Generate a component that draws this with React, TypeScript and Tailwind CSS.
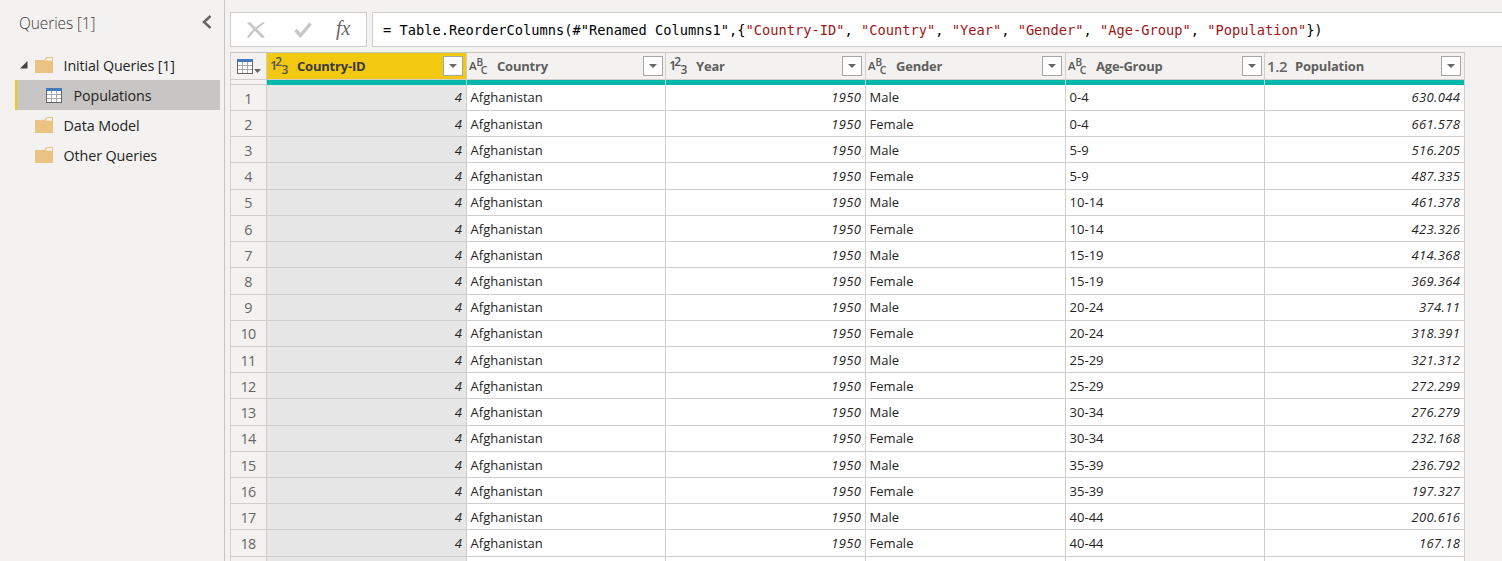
import React from "react";

const columns = [
  { name: "Country-ID", type: "123", edge: "w-[200px]", selected: true },
  { name: "Country", type: "abc", edge: "w-[199px]", narrow: true },
  { name: "Year", type: "123", edge: "w-[200px]" },
  { name: "Gender", type: "abc", edge: "w-[200px]" },
  { name: "Age-Group", type: "abc", edge: "w-[199px]", narrow: true },
  { name: "Population", type: "1.2", edge: "w-[200px]" },
];

const populations = [
  "630.044", "661.578", "516.205", "487.335", "461.378", "423.326", "414.368", "369.364", "374.11",
  "318.391", "321.312", "272.299", "276.279", "232.168", "236.792", "197.327", "200.616", "167.18",
];
const ages = ["0-4", "5-9", "10-14", "15-19", "20-24", "25-29", "30-34", "35-39", "40-44"];
const tallRows = [3, 7, 12, 17];
const raisedRows = [0, 4, 8, 9, 13];

function TableIcon() {
  return (
    <svg width="16" height="15" viewBox="0 0 16 15" shapeRendering="crispEdges" className="shrink-0">
      <rect width="16" height="15" fill="#666" />
      <rect width="16" height="3" fill="#447ab9" />
      <rect x="1" y="3" width="14" height="11" fill="#a9a9a9" />
      {[1, 6, 11].map((x) =>
        [3, 7, 11].map((y) => <rect key={`${x}-${y}`} x={x} y={y} width="4" height="3" fill="#fff" />)
      )}
    </svg>
  );
}

function FolderIcon() {
  return (
    <svg width="18" height="16" viewBox="0 0 18 16" className="shrink-0">
      <path d="M0 3H9L11.5 0H18V16H0Z" fill="#eac282" />
      <path d="M10.5 3.5L12.2 1.2H17V3.5Z" fill="#fff" />
    </svg>
  );
}

function TypeIcon({ type }: { type: string }) {
  if (type === "1.2") {
    return <span className="w-[28px] shrink-0 text-[15px] leading-5 font-semibold tracking-[-0.4px] text-[#666]">1.2</span>;
  }
  if (type === "abc") {
    return (
      <svg width="28" height="24" viewBox="0 -2 28 24" className="shrink-0 overflow-visible font-semibold" fill="#555">
        <text x="0" y="13.5" fontSize="11.5">A</text>
        <text x="7.6" y="9.5" fontSize="10">B</text>
        <text x="11.8" y="17.7" fontSize="10.5">C</text>
      </svg>
    );
  }
  return (
    <svg width="28" height="24" viewBox="0 -2 28 24" className="shrink-0 overflow-visible font-semibold" fill="#555">
      <text x="1" y="13.7" fontSize="13">1</text>
      <text x="6.2" y="10" fontSize="12">2</text>
      <text x="12.5" y="17.8" fontSize="12">3</text>
    </svg>
  );
}

function Sidebar() {
  return (
    <aside className="h-full w-[225px] shrink-0 border-r border-[#c8c6c4] text-[14.3px] text-[#252423]">
      <div className="flex h-[50px] items-start justify-between pt-[12px] pr-[12px] pl-[19px] text-[#3b3a39]">
        <span className="text-[15.5px] leading-[23px] font-light tracking-[-0.1px]">Queries [1]</span>
        <svg width="10" height="14" viewBox="0 0 10 14" className="mt-[3px]">
          <path d="M8.5 1L2 7L8.5 13" fill="none" stroke="#666" strokeWidth="2.5" />
        </svg>
      </div>
      <div className="flex h-[30px] items-center pl-[20px]">
        <svg width="8" height="8" viewBox="0 0 8 8"><path d="M7.5 0V7.5H0Z" fill="#444" /></svg>
        <span className="w-[7px]" />
        <FolderIcon />
        <span className="ml-[10.6px] pt-[2px] tracking-[-0.13px]">Initial Queries [1]</span>
      </div>
      <div className="ml-[15px] flex h-[30px] w-[205px] items-center border-l-2 border-[#f2c811] bg-[#c8c6c4] pl-[29px]">
        <TableIcon />
        <span className="ml-[11.6px] pt-[2px] tracking-[-0.13px]">Populations</span>
      </div>
      {["Data Model", "Other Queries"].map((name) => (
        <div key={name} className="flex h-[30px] items-center pl-[35px]">
          <FolderIcon />
          <span className="ml-[10.6px] pt-[2px] tracking-[-0.1px]">{name}</span>
        </div>
      ))}
    </aside>
  );
}

function FormulaBar() {
  const names = columns.map((c) => c.name);
  return (
    <div className="flex h-[35px] shrink-0 gap-[5px]">
      <div className="flex w-[137px] shrink-0 items-center border border-[#d0cecc] bg-white pl-[15px]">
        <svg width="20" height="18" viewBox="0 0 20 18">
          <path d="M1 2L4 1C9 6 14 11 19 16L16 17C11 12 6 7 1 2Z" fill="#c8c6c4" />
          <path d="M17 1L19 2C13 6 7 11 3 17L1 16C5 10 11 5 17 1Z" fill="#c8c6c4" />
        </svg>
        <svg width="18" height="16" viewBox="0 0 18 16" className="ml-[28px]">
          <path d="M1.5 8L6.5 13.5L16.5 1.5" fill="none" stroke="#c8c6c4" strokeWidth="3.4" />
        </svg>
        <span className="ml-[24px] pb-[3px] font-['Liberation_Serif',serif] text-[20px] leading-5 text-[#666] italic">fx</span>
      </div>
      <div className="flex flex-1 items-center border border-r-0 border-[#d0cecc] bg-white pt-px pl-[10px] font-['DejaVu_Sans_Mono',monospace] text-[13.7px] whitespace-pre text-black">
        <span>= Table.ReorderColumns(#"Renamed Columns1",{"{"}</span>
        {names.map((name, i) => (
          <React.Fragment key={name}>
            <span className="text-[#a31515]">"{name}"</span>
            <span>{i < names.length - 1 ? ", " : "})"}</span>
          </React.Fragment>
        ))}
      </div>
    </div>
  );
}

function GridHeader() {
  return (
    <div className="flex h-[33px] w-[1235px] border-t border-[#c8c6c4]">
      <div className="flex w-[37px] shrink-0 flex-col border-x border-[#d0cecc]">
        <div className="flex h-[26px] items-center pl-[6px]">
          <TableIcon />
          <svg width="7" height="4" viewBox="0 0 7 4" className="mt-[10px] ml-[1px]"><path d="M0 0H7L3.5 4Z" fill="#666" /></svg>
        </div>
        <div className="h-[6px] border-y border-[#d0cecc]" />
      </div>
      {columns.map((c) => (
        <div key={c.name} className={`${c.edge} flex shrink-0 flex-col border-r border-[#d0cecc]`}>
          <div className={`flex h-[27px] items-center border-b border-[#d0cecc] pl-[2px] ${c.narrow ? "pr-[2px]" : "pr-[3px]"} ${c.selected ? "bg-[#f2c811] text-[#3b3a39]" : "text-[#605e5c]"}`}>
            <TypeIcon type={c.type} />
            <span className="flex-1 text-[13px] leading-5 font-bold tracking-[-0.2px]">{c.name}</span>
            <span className="flex h-[20px] w-[20px] items-center justify-center border border-[#a6a6a6] bg-white">
              <svg width="8" height="4" viewBox="0 0 8 4"><path d="M0 0H8L4 4Z" fill="#666" /></svg>
            </span>
          </div>
          <div className="h-[5px] bg-[#01b8aa]" />
        </div>
      ))}
    </div>
  );
}

function GridRow({ index }: { index: number }) {
  const raised = raisedRows.includes(index);
  const cells = [
    "4", "Afghanistan", "1950", index % 2 ? "Female" : "Male", ages[Math.floor(index / 2)], populations[index],
  ];
  return (
    <div className={`flex text-[13px] leading-[18px] ${tallRows.includes(index) ? "h-[27px]" : "h-[26px]"}`}>
      <div className={`flex w-[37px] shrink-0 justify-center border-x border-b border-[#d0cecc] pr-px text-[14.3px] tracking-[-0.7px] text-[#666] ${raised && index ? "pt-[4px]" : "pt-[5px]"}`}>
        {cells[5] ? index + 1 : ""}
      </div>
      {columns.map((c, i) => (
        <div
          key={c.name}
          className={`${c.edge} flex shrink-0 border-r border-b border-[#d0cecc] text-[#252423] ${raised ? "pt-[3px]" : "pt-[4px]"} ${c.type === "abc" ? "pl-[3.6px]" : "justify-end pr-[3.8px] tracking-[0.35px] italic"} ${c.selected ? "bg-[#e6e6e6]" : "bg-white"}`}
        >
          {cells[5] ? cells[i] : ""}
        </div>
      ))}
    </div>
  );
}

export default function App() {
  return (
    <div className="flex h-[561px] w-[1502px] overflow-hidden bg-[#f3f2f1] font-['Open_Sans',sans-serif]">
      <Sidebar />
      <main className="flex min-w-0 flex-1 flex-col pt-[12px] pl-[5px]">
        <FormulaBar />
        <div className="mt-[5px]">
          <GridHeader />
          {Array.from({ length: 19 }, (_, i) => <GridRow key={i} index={i} />)}
        </div>
      </main>
    </div>
  );
}
